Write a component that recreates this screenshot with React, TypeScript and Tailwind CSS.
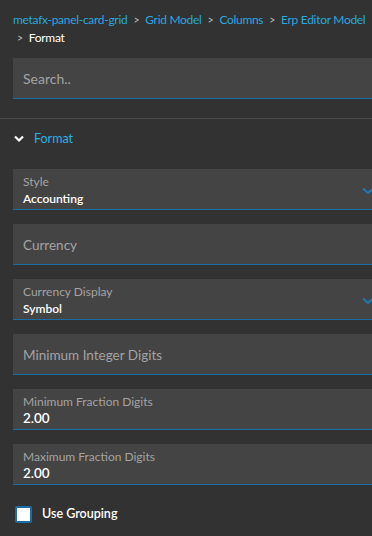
const font = { fontFamily: "Lato, 'Noto Sans', sans-serif" };

function Crumb({ label, last }: { label: string; last?: boolean }) {
  return <span className={last ? "text-white" : "text-[#2aa7df]"}>{label}</span>;
}

const Sep = () => <span className="mx-[6px] text-[#bdbdbd] text-[10.5px]">&gt;</span>;

function SelectField({ label, value }: { label: string; value: string }) {
  return (
    <div className="relative h-[41px] w-[368px] bg-[#444444] border-b border-[#1b6ea5] pl-[10px] pt-[5px]">
      <div className="text-[12px] leading-[15px] text-[#a3a3a3]">{label}</div>
      <div className="mt-[2px] text-[12px] leading-[16px] text-white font-semibold">{value}</div>
      <svg className="absolute right-[7px] top-[18px]" width="12" height="8" viewBox="0 0 12 8">
        <path d="M1 1.5 L6 6 L11 1.5" stroke="#1f7ab8" strokeWidth="2" fill="none" />
      </svg>
    </div>
  );
}

function TextField({ placeholder }: { placeholder: string }) {
  return (
    <div className="h-[41px] w-[368px] bg-[#444444] border-b border-[#1b6ea5] pl-[10px] flex items-center">
      <span className="text-[13.5px] text-[#a3a3a3] pt-[2px]">{placeholder}</span>
    </div>
  );
}

function NumberField({ label, value }: { label: string; value: string }) {
  return (
    <div className="h-[41px] w-[368px] bg-[#444444] border-b border-[#1b6ea5] pl-[10px] pt-[5px]">
      <div className="text-[12px] leading-[15px] text-[#a3a3a3]">{label}</div>
      <div className="mt-[1px] text-[13.5px] leading-[17px] text-white font-semibold">{value}</div>
    </div>
  );
}

export default function App() {
  return (
    <div className="w-[372px] h-[536px] overflow-hidden bg-[#323232]" style={font}>
      <div className="pl-[13px] pt-[11px] text-[12px] leading-[17px] tracking-[-0.3px] w-[372px]">
        <div className="whitespace-nowrap">
          <Crumb label="metafx-panel-card-grid" />
          <Sep />
          <Crumb label="Grid Model" />
          <Sep />
          <Crumb label="Columns" />
          <Sep />
          <Crumb label="Erp Editor Model" />
        </div>
        <div>
          <span className="ml-[4px] mr-[6px] text-[#bdbdbd] text-[10.5px]">&gt;</span>
          <Crumb label="Format" last />
        </div>
      </div>

      <div className="pl-[13px] mt-[11px]">
        <div className="h-[41px] w-[368px] bg-[#444444] border-b border-[#1b6ea5] pl-[10px] flex items-center">
          <span className="text-[14px] text-[#a3a3a3]">Search..</span>
        </div>
      </div>

      <div className="mt-[19px] border-t border-[#4a4a4a]" />

      <div className="flex items-center pl-[14px] h-[40px]">
        <svg width="10" height="8" viewBox="0 0 10 8">
          <path d="M1 1.5 L5 5.5 L9 1.5" stroke="#ffffff" strokeWidth="2.2" fill="none" />
        </svg>
        <span className="ml-[10px] text-[12.5px] text-[#2ab0e8]">Format</span>
      </div>

      <div className="pl-[13px] flex flex-col gap-[14px] mt-[10px]">
        <SelectField label="Style" value="Accounting" />
        <TextField placeholder="Currency" />
        <SelectField label="Currency Display" value="Symbol" />
        <TextField placeholder="Minimum Integer Digits" />
        <NumberField label="Minimum Fraction Digits" value="2.00" />
        <NumberField label="Maximum Fraction Digits" value="2.00" />
      </div>

      <div className="flex items-center pl-[15px] mt-[20px]">
        <div className="w-[17px] h-[17px] bg-white border-[2px] border-[#1b6ea5] rounded-[2px]" />
        <span className="ml-[10px] text-[12.5px] text-white font-semibold">Use Grouping</span>
      </div>
    </div>
  );
}
